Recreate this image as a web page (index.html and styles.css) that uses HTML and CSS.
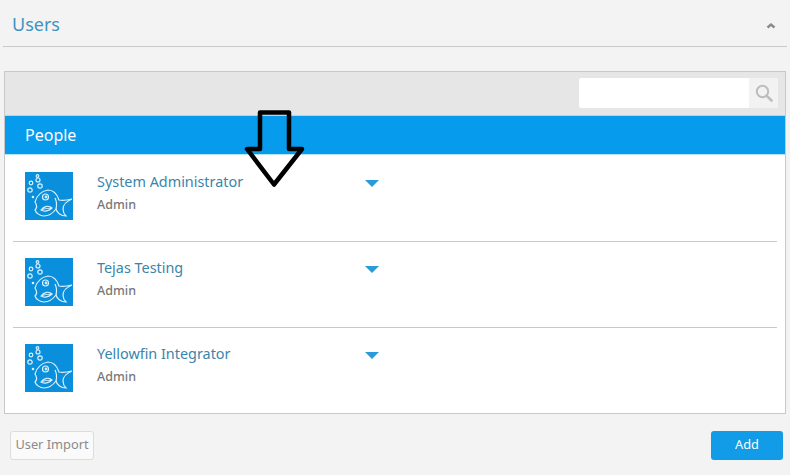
FILE: index.html
```html
<!DOCTYPE html>
<html lang="en">
<head>
    <meta charset="UTF-8">
    <meta name="viewport" content="width=device-width, initial-scale=1.0">
    <title>Users</title>
    <link rel="stylesheet" href="styles.css">
</head>
<body>
<svg width="0" height="0" class="defs">
    <symbol id="fish" viewBox="0 0 48 48">
        <g fill="none" stroke="#d8f1fd" stroke-width="1.200">
            <circle cx="12.500" cy="4" r="1.300"/>
            <circle cx="13" cy="8" r="2"/>
            <circle cx="6" cy="11" r="1.800"/>
            <circle cx="15" cy="14" r="2.200"/>
            <circle cx="5" cy="18" r="2.200"/>
            <circle cx="8" cy="25" r="0.700"/>
            <path d="M10 30C12 23 17 19 23 18C28 18 32 22 34 28C38 29 43 28 47 27C42 29 38 33 38 37C38 39 39 42 41 44C36 44 32 41 31 37C28 41 24 44 19 44C15 44 11 41 10 38C12 36 12 33 10 30Z"/>
            <circle cx="20.500" cy="25" r="3"/>
            <circle cx="21" cy="25" r="0.800"/>
            <path d="M16 38C19 34 24 33 27 36C24 39 19 40 16 38ZM17 37.500C20 36.500 23 36 27 36"/>
            <path d="M30 26C32 30 32 33 31 37"/>
        </g>
    </symbol>
</svg>

<div class="page-header">
    <h1>Users</h1>
    <svg class="collapse-icon" width="10" height="7" viewBox="0 0 10 7">
        <path d="M1.500 5.500L5 2.500l3.500 3" fill="none" stroke="#8a8a8a" stroke-width="2.400"/>
    </svg>
</div>

<div class="panel">
    <div class="toolbar">
        <div class="search">
            <input class="search-input" type="text">
            <span class="search-btn">
                <svg width="18" height="18" viewBox="0 0 18 18">
                    <circle cx="7.500" cy="7.500" r="5.700" fill="none" stroke="#bdbdbd" stroke-width="2"/>
                    <path d="M11.800 11.800L16.500 16.500" stroke="#bdbdbd" stroke-width="2.600" stroke-linecap="round"/>
                </svg>
            </span>
        </div>
    </div>
    <div class="panel-title">People</div>
    <ul class="user-list">
        <li class="user-row">
            <svg class="avatar"><use href="#fish"/></svg>
            <div class="user-info">
                <a class="user-name" href="#">System Administrator</a>
                <span class="user-role">Admin</span>
            </div>
            <span class="caret"></span>
        </li>
        <li class="user-row">
            <svg class="avatar"><use href="#fish"/></svg>
            <div class="user-info">
                <a class="user-name" href="#">Tejas Testing</a>
                <span class="user-role">Admin</span>
            </div>
            <span class="caret"></span>
        </li>
        <li class="user-row">
            <svg class="avatar"><use href="#fish"/></svg>
            <div class="user-info">
                <a class="user-name" href="#">Yellowfin Integrator</a>
                <span class="user-role">Admin</span>
            </div>
            <span class="caret"></span>
        </li>
    </ul>
</div>

<div class="actions">
    <button class="btn btn-plain">User Import</button>
    <button class="btn btn-add">Add</button>
</div>

<!-- annotation drawn over the page -->
<svg class="annotation" width="62" height="80" viewBox="0 0 62 80">
    <path d="M16 2.500H45V39H58L30 74.500L3 39H16Z" fill="none" stroke="#000" stroke-width="4.500" stroke-linejoin="round"/>
</svg>
</body>
</html>
```

FILE: styles.css
```css
/* General Styles */
body {
    font-family: 'Noto Sans', sans-serif;
    margin: 0;
    padding: 0 3px 0 3px;
    background: #f3f3f3;
    color: #333;
    position: relative;
    height: 475px;
    box-sizing: border-box;
    overflow: hidden;
}

.defs {
    position: absolute;
}

/* Page Header */
.page-header {
    display: flex;
    align-items: center;
    justify-content: space-between;
    height: 44px;
    padding: 2px 11px 0 9px;
    border-bottom: 1px solid #c9c9c9;
}

h1 {
    margin: 0;
    font-size: 18px;
    font-weight: 400;
    color: #3f93c4;
}

.collapse-icon {
    margin-top: 3px;
}

/* Panel */
.panel {
    margin: 24px 1px 0;
    background: #fff;
    border: 1px solid #c9c9c9;
}

.toolbar {
    display: flex;
    justify-content: flex-end;
    align-items: center;
    height: 42px;
    padding: 0 7px 1px 0;
    background: #e6e6e6;
    border-bottom: 1px solid #a8d8f2;
}

.search {
    display: flex;
    width: 199px;
    height: 30px;
    background: #fff;
    border-radius: 3px;
    overflow: hidden;
}

.search-input {
    flex: 1;
    min-width: 0;
    border: 0;
    padding: 0;
    outline: none;
    background: #fff;
}

.search-btn {
    display: flex;
    align-items: center;
    justify-content: center;
    width: 29px;
    background: #f2f2f2;
}

.panel-title {
    box-sizing: border-box;
    height: 39px;
    line-height: 38px;
    padding-left: 20px;
    font-size: 16px;
    font-weight: 400;
    color: #fff;
    background: #069bec;
    border-bottom: 1px solid #b5e4fb;
}

/* User List */
.user-list {
    list-style: none;
    margin: 0;
    padding: 1px 8px 0;
}

.user-row {
    display: flex;
    align-items: flex-start;
    height: 86px;
    padding-top: 16px;
    box-sizing: border-box;
    border-bottom: 1px solid #c9c9c9;
}

.user-row:last-child {
    height: 85px;
    border-bottom: 0;
}

.avatar {
    width: 48px;
    height: 48px;
    margin-left: 12px;
    background: #0a8fdc;
}

.user-info {
    display: flex;
    flex-direction: column;
    width: 268px;
    margin-left: 24px;
}

.user-name {
    font-size: 14.400px;
    line-height: 20px;
    color: #3a85ab;
    text-decoration: none;
}

.user-role {
    margin-top: 5px;
    font-size: 12.500px;
    line-height: 16px;
    font-weight: 500;
    color: #77787a;
}

.caret {
    width: 0;
    height: 0;
    margin-top: 8px;
    border-left: 7px solid transparent;
    border-right: 7px solid transparent;
    border-top: 7px solid #2a9ad8;
}

/* Buttons */
.actions {
    display: flex;
    justify-content: space-between;
    margin-top: 17px;
    padding: 0 4px 0 7px;
}

.btn {
    height: 29px;
    padding: 0 0 3px;
    font-family: inherit;
    font-size: 12.800px;
    border-radius: 3px;
    cursor: pointer;
}

.btn-plain {
    width: 84px;
    color: #8a8a8a;
    background: #fafafa;
    border: 1px solid #ddd;
}

.btn-add {
    width: 72px;
    color: #fff;
    background: #129be6;
    border: 0;
}

/* Annotation */
.annotation {
    position: absolute;
    left: 244px;
    top: 110px;
}
```
